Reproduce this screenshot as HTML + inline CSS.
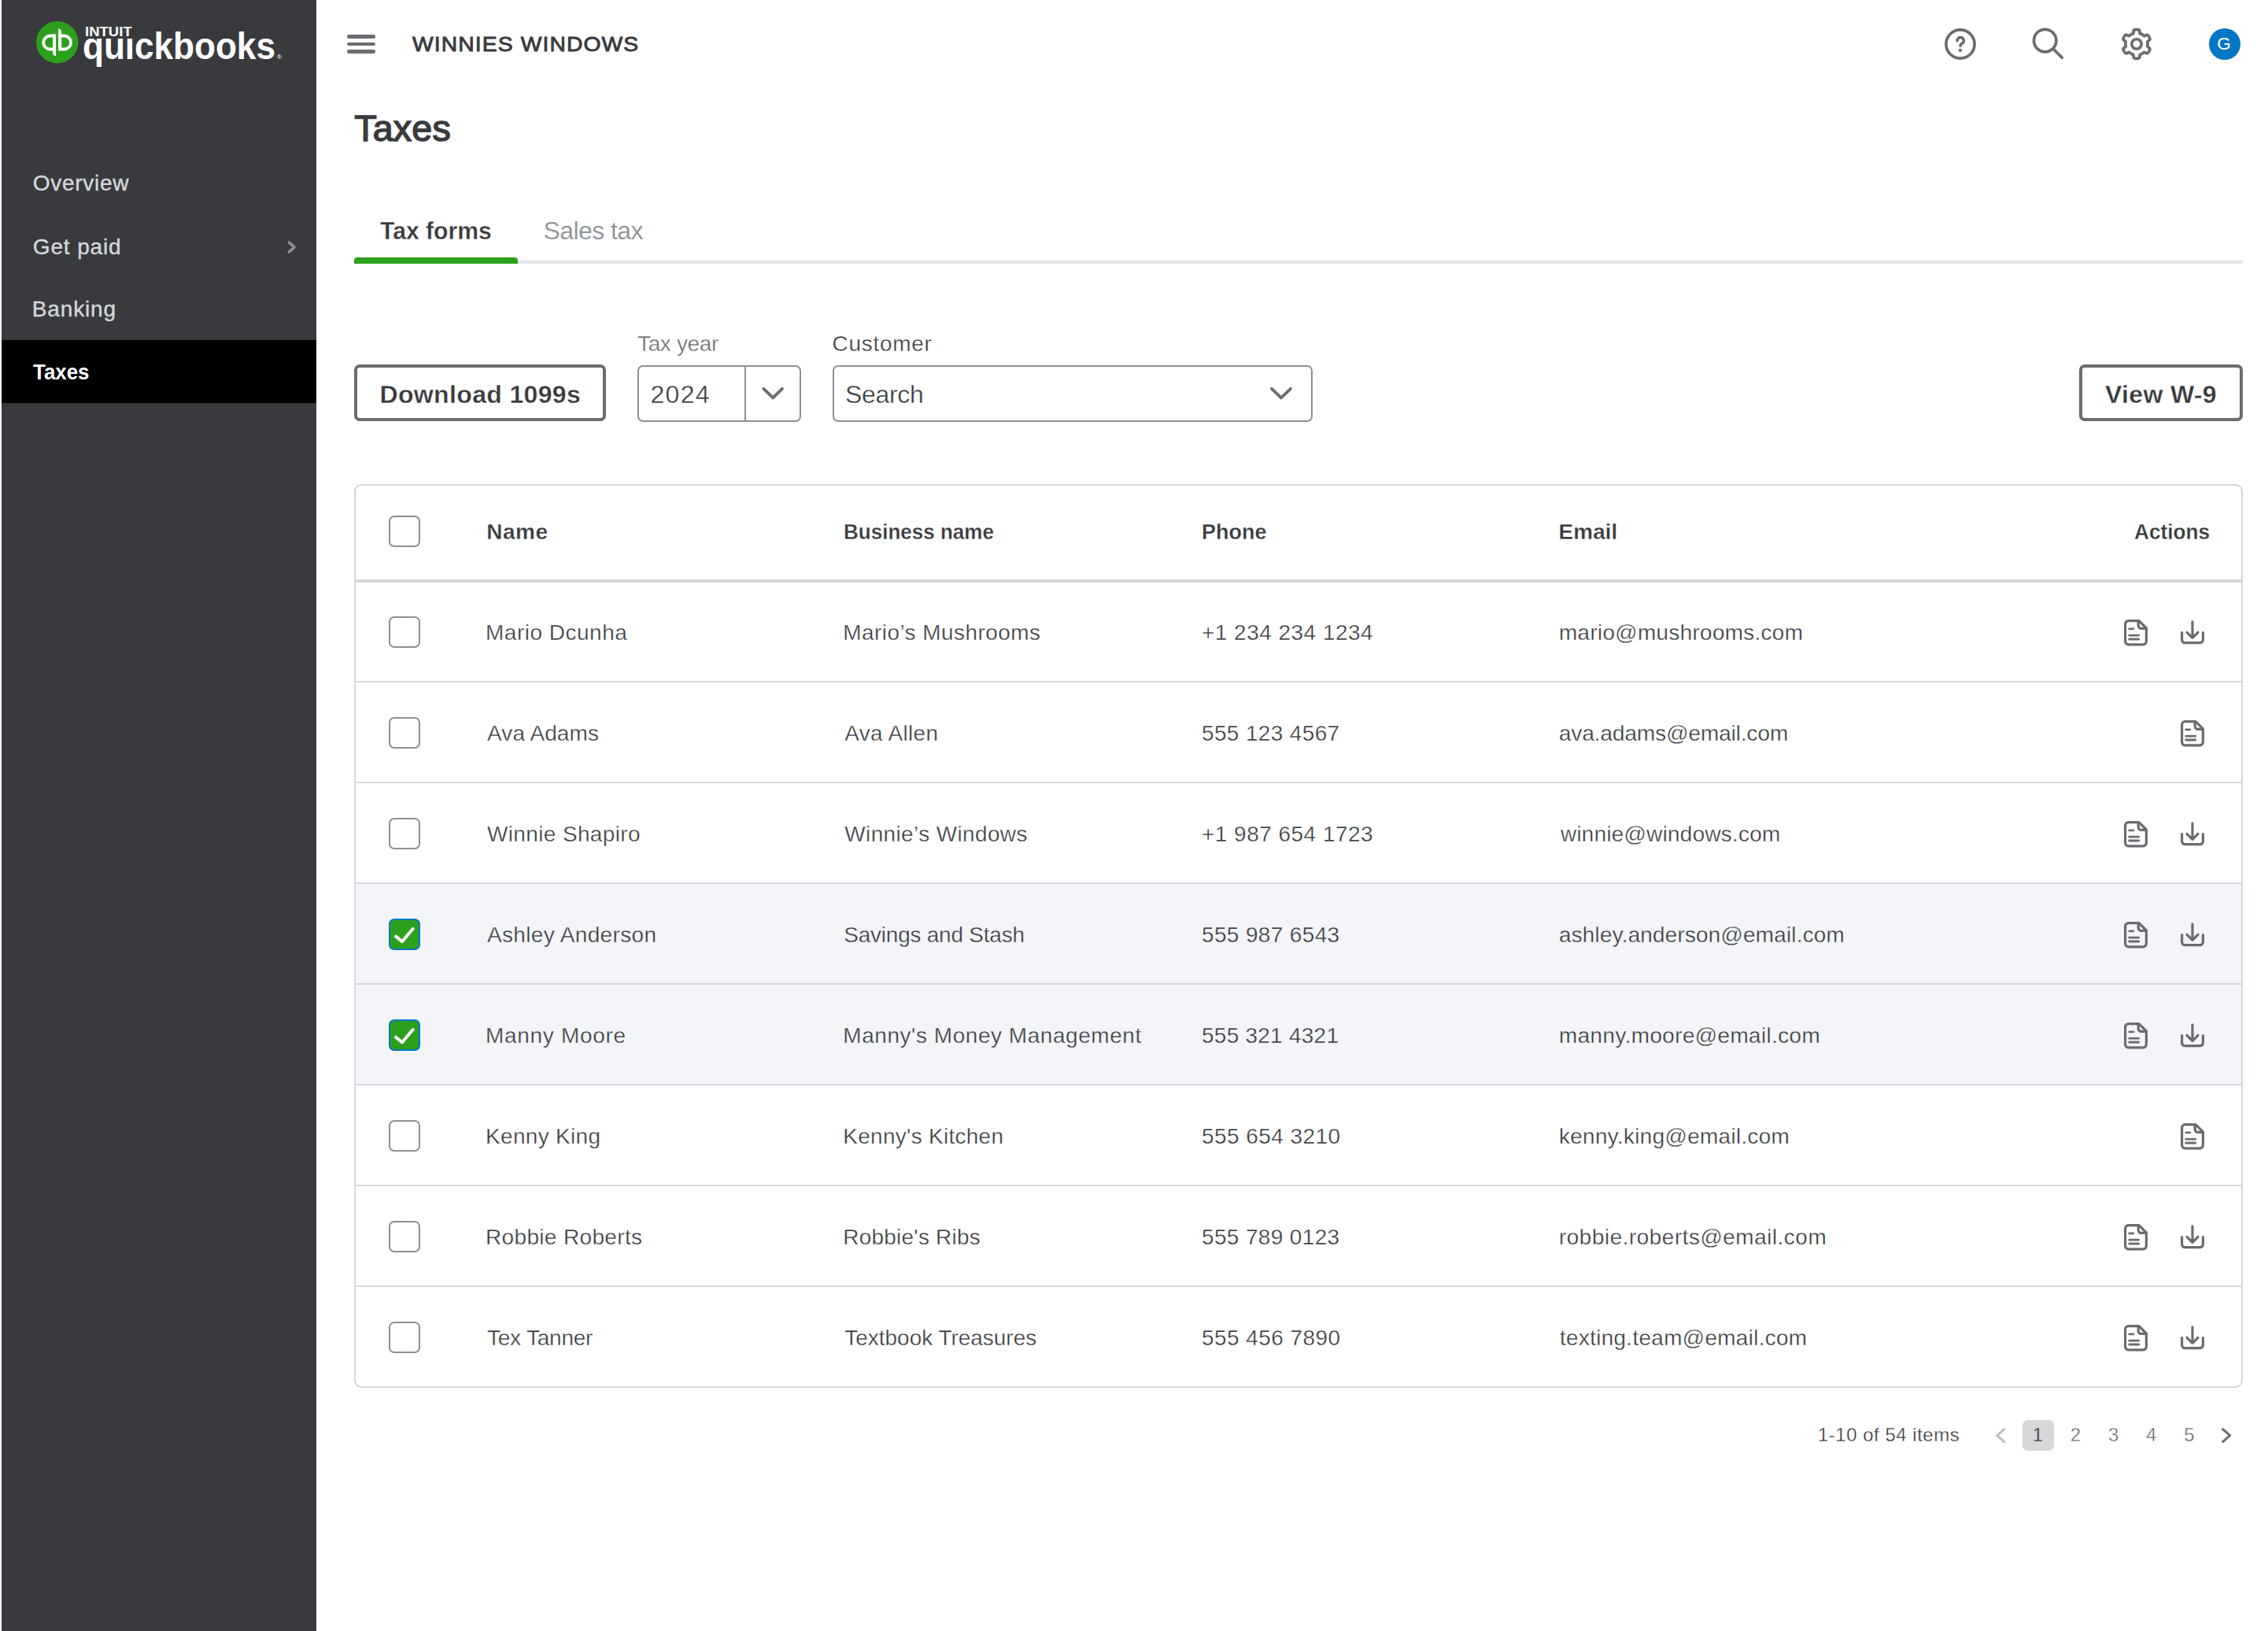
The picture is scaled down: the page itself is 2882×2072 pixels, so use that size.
<!DOCTYPE html>
<html lang="en"><head><meta charset="utf-8"><title>Taxes - QuickBooks</title>
<style>
html,body{margin:0;padding:0;background:#fff;}
body{width:2882px;height:2072px;position:relative;overflow:hidden;font-family:"Liberation Sans",sans-serif;color:#393A3D;}
.t{position:absolute;white-space:nowrap;line-height:1;}
.abs{position:absolute;}
svg{position:absolute;overflow:visible;}
.side{position:absolute;left:2px;top:0;width:400px;height:2072px;background:#393A3D;}
.active{position:absolute;left:2px;top:432px;width:400px;height:80px;background:#000;}
.cb{position:absolute;left:494px;width:36px;height:36px;border:2px solid #8D9096;border-radius:7px;background:#fff;}
.cb.on{background:#2CA01C;border-color:#0077C5;}
.btn{position:absolute;box-sizing:border-box;border:4px solid #6B6C72;border-radius:7px;background:#fff;}
.sel{position:absolute;box-sizing:border-box;border:2px solid #8D9096;border-radius:7px;background:#fff;}
.hl{position:absolute;left:452px;width:2396px;height:2px;background:#D4D7DC;}
.rowsel{position:absolute;left:452px;width:2396px;background:#F4F5F8;}
</style></head><body>

<div class="side"></div><div class="active"></div>
<svg style="left:45.8px;top:26.5px" width="53.4" height="53.4" viewBox="135 152.5 1245 1245">
<circle cx="757.5" cy="775" r="622.5" fill="#2CA01C"/>
<path d="M672 585H547a197.5 197.5 0 0 0 0 395h80" fill="none" stroke="#fff" stroke-width="90"/>
<path d="M625 540h95v645q-95-20-95-100z" fill="#fff"/>
<path d="M790 370q95 20 95 100v555h-95z" fill="#fff"/>
<path d="M838 585h127a197.5 197.5 0 0 1 0 395h-82" fill="none" stroke="#fff" stroke-width="90"/>
</svg>
<span class="t" style="left:108.38px;top:32.03px;font-size:16.5px;letter-spacing:0.031px;font-weight:bold;color:#fff;transform:scaleX(1.12);transform-origin:0 0;">INTUIT</span>
<span class="t" style="left:105.37px;top:35.39px;font-size:47.5px;letter-spacing:-0.062px;font-weight:bold;color:#fff;transform:scaleX(0.93);transform-origin:0 0;">quıckbooks</span>
<span class="t" style="left:352.00px;top:69.43px;font-size:8px;color:#fff;">®</span>
<span class="t" style="left:41.80px;top:219.30px;font-size:28px;letter-spacing:0.704px;color:#D4D7DC;-webkit-text-stroke:0.4px #D4D7DC;">Overview</span>
<span class="t" style="left:41.80px;top:299.80px;font-size:28px;letter-spacing:0.861px;color:#D4D7DC;-webkit-text-stroke:0.4px #D4D7DC;">Get paid</span>
<span class="t" style="left:40.80px;top:379.30px;font-size:28px;letter-spacing:0.848px;color:#D4D7DC;-webkit-text-stroke:0.4px #D4D7DC;">Banking</span>
<span class="t" style="left:42.00px;top:458.70px;font-size:28px;font-weight:bold;color:#fff;transform:scaleX(0.9252);transform-origin:0 0;">Taxes</span>
<svg style="left:360px;top:300px" width="24" height="28" viewBox="360 300 24 28"><path d="M367.3 308l6.8 6-6.8 6" fill="none" stroke="#8D9096" stroke-width="3.6" stroke-linecap="round" stroke-linejoin="round"/></svg>
<div class="abs" style="left:441px;top:44px;width:36px;height:4.5px;border-radius:2.25px;background:#6B6C72"></div>
<div class="abs" style="left:441px;top:53.6px;width:36px;height:4.5px;border-radius:2.25px;background:#6B6C72"></div>
<div class="abs" style="left:441px;top:63.4px;width:36px;height:4.5px;border-radius:2.25px;background:#6B6C72"></div>
<span class="t" style="left:523.50px;top:43.15px;font-size:26.4px;letter-spacing:1.053px;transform:scaleX(1.07);transform-origin:0 0;-webkit-text-stroke:0.9px #393A3D;">WINNIES WINDOWS</span>
<svg style="left:2467.9px;top:32.9px" width="46" height="46" viewBox="-23 -23 46 46">
<circle cx="0" cy="0" r="18.1" fill="none" stroke="#6B6C72" stroke-width="3.7"/>
<path d="M-3.9 -4.3a4.15 4.15 0 1 1 7.33 2.67C1.6 -0.2 0 0.1 0 2.3" fill="none" stroke="#6B6C72" stroke-width="3.6" stroke-linecap="round"/>
<circle cx="-0.1" cy="8" r="2.15" fill="#6B6C72"/>
</svg>
<svg style="left:2578px;top:31px" width="50" height="50" viewBox="2578 31 50 50">
<circle cx="2598.7" cy="51.6" r="14.2" fill="none" stroke="#6B6C72" stroke-width="3.7"/>
<path d="M2609.2 62.1L2620.3 73.2" fill="none" stroke="#6B6C72" stroke-width="3.7" stroke-linecap="round"/>
</svg>
<svg style="left:2691.9px;top:32.8px" width="46" height="46" viewBox="-23 -23 46 46"><path d="M-4.94 -13.10Q-3.90 -13.45 -3.90 -14.55L-3.90 -15.87Q-3.90 -18.30 -1.47 -18.30L1.47 -18.30Q3.90 -18.30 3.90 -15.87L3.90 -14.55Q3.90 -13.45 4.94 -13.10L5.52 -12.91Q7.14 -12.37 8.42 -11.23L8.87 -10.83Q9.69 -10.10 10.65 -10.65L11.80 -11.31Q13.90 -12.53 15.11 -10.43L16.58 -7.87Q17.80 -5.77 15.70 -4.56L14.55 -3.90Q13.59 -3.35 13.82 -2.27L13.94 -1.67Q14.28 -0.00 13.94 1.67L13.82 2.27Q13.59 3.35 14.55 3.90L15.70 4.56Q17.80 5.77 16.58 7.87L15.11 10.43Q13.90 12.53 11.80 11.31L10.65 10.65Q9.69 10.10 8.87 10.83L8.42 11.23Q7.14 12.37 5.52 12.91L4.94 13.10Q3.90 13.45 3.90 14.55L3.90 15.87Q3.90 18.30 1.47 18.30L-1.47 18.30Q-3.90 18.30 -3.90 15.87L-3.90 14.55Q-3.90 13.45 -4.94 13.10L-5.52 12.91Q-7.14 12.37 -8.42 11.23L-8.87 10.83Q-9.69 10.10 -10.65 10.65L-11.80 11.31Q-13.90 12.53 -15.11 10.43L-16.58 7.87Q-17.80 5.77 -15.70 4.56L-14.55 3.90Q-13.59 3.35 -13.82 2.27L-13.94 1.67Q-14.28 0.00 -13.94 -1.67L-13.82 -2.27Q-13.59 -3.35 -14.55 -3.90L-15.70 -4.56Q-17.80 -5.77 -16.58 -7.87L-15.11 -10.43Q-13.90 -12.53 -11.80 -11.31L-10.65 -10.65Q-9.69 -10.10 -8.87 -10.83L-8.42 -11.23Q-7.14 -12.37 -5.52 -12.91Z" fill="none" stroke="#6B6C72" stroke-width="3.7" stroke-linejoin="round"/><circle cx="0" cy="0" r="6.2" fill="none" stroke="#6B6C72" stroke-width="3.6"/></svg>
<div class="abs" style="left:2806.6px;top:35.6px;width:40.2px;height:40.2px;border-radius:50%;background:#0077C5"></div>
<span class="t" style="left:2817.30px;top:44.85px;font-size:22.5px;color:#fff;">G</span>
<span class="t" style="left:450.20px;top:140.17px;font-size:46.7px;letter-spacing:0.146px;-webkit-text-stroke:1.5px #393A3D;">Taxes</span>
<div class="abs" style="left:450px;top:331px;width:2400px;height:4px;background:#E3E5E8"></div>
<div class="abs" style="left:450px;top:327px;width:208px;height:8px;border-radius:4px 4px 0 0;background:#2CA01C"></div>
<span class="t" style="left:483.00px;top:276.91px;font-size:32px;font-weight:bold;transform:scaleX(0.9415);transform-origin:0 0;-webkit-text-stroke:0.3px #fff;">Tax forms</span>
<span class="t" style="left:690.50px;top:276.91px;font-size:32px;letter-spacing:-0.566px;color:#8D9096;-webkit-text-stroke:0.2px #fff;">Sales tax</span>
<div class="btn" style="left:450px;top:463px;width:320px;height:72px"></div>
<span class="t" style="left:482.50px;top:484.61px;font-size:32px;letter-spacing:0.350px;font-weight:bold;-webkit-text-stroke:0.3px #fff;">Download 1099s</span>
<span class="t" style="left:810.00px;top:422.60px;font-size:28px;letter-spacing:-0.357px;color:#6B6C72;-webkit-text-stroke:0.35px #fff;">Tax year</span>
<div class="sel" style="left:810px;top:464px;width:208px;height:71.5px"></div>
<div class="abs" style="left:945.6px;top:466px;width:2px;height:68px;background:#8D9096"></div>
<span class="t" style="left:826.50px;top:484.61px;font-size:32px;letter-spacing:1.270px;-webkit-text-stroke:0.35px #fff;">2024</span>
<svg style="left:960px;top:485px" width="44" height="30" viewBox="960 485 44 30"><path d="M970.4 493.8l11.8 11.6 11.8-11.6" fill="none" stroke="#6B6C72" stroke-width="3.8" stroke-linecap="round" stroke-linejoin="round"/></svg>
<span class="t" style="left:1057.60px;top:422.60px;font-size:28px;letter-spacing:0.680px;-webkit-text-stroke:0.35px #fff;">Customer</span>
<div class="sel" style="left:1058px;top:464px;width:610px;height:71.5px"></div>
<span class="t" style="left:1074.00px;top:484.61px;font-size:32px;letter-spacing:-0.319px;-webkit-text-stroke:0.35px #fff;">Search</span>
<svg style="left:1606px;top:485px" width="44" height="30" viewBox="1606 485 44 30"><path d="M1616 493.8l12 11.6 12-11.6" fill="none" stroke="#6B6C72" stroke-width="3.8" stroke-linecap="round" stroke-linejoin="round"/></svg>
<div class="btn" style="left:2642px;top:463px;width:208px;height:72px"></div>
<span class="t" style="left:2675.00px;top:484.61px;font-size:32px;letter-spacing:0.335px;font-weight:bold;-webkit-text-stroke:0.3px #fff;">View W-9</span>
<div class="abs" style="left:450px;top:615px;width:2396px;height:1144px;border:2px solid #D4D7DC;border-radius:9px;background:#fff"></div>
<div class="rowsel" style="top:1123px;height:126px"></div>
<div class="rowsel" style="top:1251px;height:126px"></div>
<div class="hl" style="top:735.5px;height:4px"></div>
<div class="hl" style="top:865px"></div>
<div class="hl" style="top:993px"></div>
<div class="hl" style="top:1121px"></div>
<div class="hl" style="top:1249px"></div>
<div class="hl" style="top:1377px"></div>
<div class="hl" style="top:1505px"></div>
<div class="hl" style="top:1633px"></div>
<div class="cb" style="top:655px"></div>
<span class="t" style="left:618.30px;top:662.10px;font-size:28px;letter-spacing:0.470px;font-weight:bold;-webkit-text-stroke:0.3px #fff;">Name</span>
<span class="t" style="left:1072.37px;top:662.10px;font-size:28px;font-weight:bold;transform:scaleX(0.9296);transform-origin:0 0;-webkit-text-stroke:0.3px #fff;">Business name</span>
<span class="t" style="left:1526.64px;top:662.10px;font-size:28px;font-weight:bold;transform:scaleX(0.9633);transform-origin:0 0;-webkit-text-stroke:0.3px #fff;">Phone</span>
<span class="t" style="left:1980.60px;top:662.10px;font-size:28px;letter-spacing:-0.006px;font-weight:bold;-webkit-text-stroke:0.3px #fff;">Email</span>
<span class="t" style="left:2712.00px;top:662.10px;font-size:28px;font-weight:bold;transform:scaleX(0.9343);transform-origin:0 0;-webkit-text-stroke:0.3px #fff;">Actions</span>
<div class="cb" style="top:783.3px"></div>
<span class="t" style="left:617.00px;top:789.90px;font-size:28px;letter-spacing:0.497px;-webkit-text-stroke:0.35px #fff;">Mario Dcunha</span>
<span class="t" style="left:1071.30px;top:789.90px;font-size:28px;letter-spacing:0.433px;-webkit-text-stroke:0.35px #fff;">Mario’s Mushrooms</span>
<span class="t" style="left:1527.00px;top:789.90px;font-size:28px;letter-spacing:0.471px;-webkit-text-stroke:0.35px #fff;">+1 234 234 1234</span>
<span class="t" style="left:1981.00px;top:789.90px;font-size:28px;letter-spacing:0.258px;-webkit-text-stroke:0.35px #fff;">mario@mushrooms.com</span>
<svg style="left:2698.9px;top:786.6px" width="30" height="33.4" viewBox="0 0 30 33.4"><path d="M19 1.6H5.6a4 4 0 0 0-4 4v22.2a4 4 0 0 0 4 4h18.8a4 4 0 0 0 4-4V11z" fill="none" stroke="#6B6C72" stroke-width="3.2" stroke-linejoin="round"/><path d="M18.2 2.4v5.4a3.6 3.6 0 0 0 3.6 3.6h5.8" fill="none" stroke="#6B6C72" stroke-width="3.2" stroke-linejoin="round"/><path d="M6.7 11.8h5.2M6.7 20.1h12M6.7 25h12" fill="none" stroke="#6B6C72" stroke-width="2.8" stroke-linecap="round"/></svg>
<svg style="left:2771px;top:788px" width="30" height="30.3" viewBox="0 0 30 30.3"><path d="M1.6 15.6v9.1a4 4 0 0 0 4 4h18.8a4 4 0 0 0 4-4v-9.1" fill="none" stroke="#6B6C72" stroke-width="3.2" stroke-linecap="round" stroke-linejoin="round"/><path d="M15 1.8v20.4M8 15.3l7 7.1 7-7.1" fill="none" stroke="#6B6C72" stroke-width="3.2" stroke-linecap="round" stroke-linejoin="round"/></svg>
<div class="cb" style="top:911.3px"></div>
<span class="t" style="left:619.00px;top:917.90px;font-size:28px;letter-spacing:0.104px;-webkit-text-stroke:0.35px #fff;">Ava Adams</span>
<span class="t" style="left:1073.30px;top:917.90px;font-size:28px;letter-spacing:0.311px;-webkit-text-stroke:0.35px #fff;">Ava Allen</span>
<span class="t" style="left:1527.00px;top:917.90px;font-size:28px;letter-spacing:0.354px;-webkit-text-stroke:0.35px #fff;">555 123 4567</span>
<span class="t" style="left:1981.00px;top:917.90px;font-size:28px;letter-spacing:-0.092px;-webkit-text-stroke:0.35px #fff;">ava.adams@email.com</span>
<svg style="left:2771px;top:914.6px" width="30" height="33.4" viewBox="0 0 30 33.4"><path d="M19 1.6H5.6a4 4 0 0 0-4 4v22.2a4 4 0 0 0 4 4h18.8a4 4 0 0 0 4-4V11z" fill="none" stroke="#6B6C72" stroke-width="3.2" stroke-linejoin="round"/><path d="M18.2 2.4v5.4a3.6 3.6 0 0 0 3.6 3.6h5.8" fill="none" stroke="#6B6C72" stroke-width="3.2" stroke-linejoin="round"/><path d="M6.7 11.8h5.2M6.7 20.1h12M6.7 25h12" fill="none" stroke="#6B6C72" stroke-width="2.8" stroke-linecap="round"/></svg>
<div class="cb" style="top:1039.3px"></div>
<span class="t" style="left:619.00px;top:1045.90px;font-size:28px;letter-spacing:0.361px;-webkit-text-stroke:0.35px #fff;">Winnie Shapiro</span>
<span class="t" style="left:1073.30px;top:1045.90px;font-size:28px;letter-spacing:0.362px;-webkit-text-stroke:0.35px #fff;">Winnie’s Windows</span>
<span class="t" style="left:1527.00px;top:1045.90px;font-size:28px;letter-spacing:0.471px;-webkit-text-stroke:0.35px #fff;">+1 987 654 1723</span>
<span class="t" style="left:1983.00px;top:1045.90px;font-size:28px;letter-spacing:0.204px;-webkit-text-stroke:0.35px #fff;">winnie@windows.com</span>
<svg style="left:2698.9px;top:1042.6px" width="30" height="33.4" viewBox="0 0 30 33.4"><path d="M19 1.6H5.6a4 4 0 0 0-4 4v22.2a4 4 0 0 0 4 4h18.8a4 4 0 0 0 4-4V11z" fill="none" stroke="#6B6C72" stroke-width="3.2" stroke-linejoin="round"/><path d="M18.2 2.4v5.4a3.6 3.6 0 0 0 3.6 3.6h5.8" fill="none" stroke="#6B6C72" stroke-width="3.2" stroke-linejoin="round"/><path d="M6.7 11.8h5.2M6.7 20.1h12M6.7 25h12" fill="none" stroke="#6B6C72" stroke-width="2.8" stroke-linecap="round"/></svg>
<svg style="left:2771px;top:1044px" width="30" height="30.3" viewBox="0 0 30 30.3"><path d="M1.6 15.6v9.1a4 4 0 0 0 4 4h18.8a4 4 0 0 0 4-4v-9.1" fill="none" stroke="#6B6C72" stroke-width="3.2" stroke-linecap="round" stroke-linejoin="round"/><path d="M15 1.8v20.4M8 15.3l7 7.1 7-7.1" fill="none" stroke="#6B6C72" stroke-width="3.2" stroke-linecap="round" stroke-linejoin="round"/></svg>
<div class="cb on" style="top:1167.3px"></div>
<svg style="left:494px;top:1167px" width="40" height="40" viewBox="0 0 40 40"><path d="M9 22.6l8 6.6 13.6-16.2" fill="none" stroke="#fff" stroke-width="4" stroke-linecap="round" stroke-linejoin="round"/></svg>
<span class="t" style="left:619.00px;top:1173.90px;font-size:28px;letter-spacing:0.349px;-webkit-text-stroke:0.35px #F4F5F8;">Ashley Anderson</span>
<span class="t" style="left:1072.30px;top:1173.90px;font-size:28px;letter-spacing:-0.239px;-webkit-text-stroke:0.35px #F4F5F8;">Savings and Stash</span>
<span class="t" style="left:1527.00px;top:1173.90px;font-size:28px;letter-spacing:0.354px;-webkit-text-stroke:0.35px #F4F5F8;">555 987 6543</span>
<span class="t" style="left:1981.00px;top:1173.90px;font-size:28px;letter-spacing:0.142px;-webkit-text-stroke:0.35px #F4F5F8;">ashley.anderson@email.com</span>
<svg style="left:2698.9px;top:1170.6px" width="30" height="33.4" viewBox="0 0 30 33.4"><path d="M19 1.6H5.6a4 4 0 0 0-4 4v22.2a4 4 0 0 0 4 4h18.8a4 4 0 0 0 4-4V11z" fill="none" stroke="#6B6C72" stroke-width="3.2" stroke-linejoin="round"/><path d="M18.2 2.4v5.4a3.6 3.6 0 0 0 3.6 3.6h5.8" fill="none" stroke="#6B6C72" stroke-width="3.2" stroke-linejoin="round"/><path d="M6.7 11.8h5.2M6.7 20.1h12M6.7 25h12" fill="none" stroke="#6B6C72" stroke-width="2.8" stroke-linecap="round"/></svg>
<svg style="left:2771px;top:1172px" width="30" height="30.3" viewBox="0 0 30 30.3"><path d="M1.6 15.6v9.1a4 4 0 0 0 4 4h18.8a4 4 0 0 0 4-4v-9.1" fill="none" stroke="#6B6C72" stroke-width="3.2" stroke-linecap="round" stroke-linejoin="round"/><path d="M15 1.8v20.4M8 15.3l7 7.1 7-7.1" fill="none" stroke="#6B6C72" stroke-width="3.2" stroke-linecap="round" stroke-linejoin="round"/></svg>
<div class="cb on" style="top:1295.3px"></div>
<svg style="left:494px;top:1295px" width="40" height="40" viewBox="0 0 40 40"><path d="M9 22.6l8 6.6 13.6-16.2" fill="none" stroke="#fff" stroke-width="4" stroke-linecap="round" stroke-linejoin="round"/></svg>
<span class="t" style="left:617.00px;top:1301.90px;font-size:28px;letter-spacing:0.679px;-webkit-text-stroke:0.35px #F4F5F8;">Manny Moore</span>
<span class="t" style="left:1071.30px;top:1301.90px;font-size:28px;letter-spacing:0.542px;-webkit-text-stroke:0.35px #F4F5F8;">Manny's Money Management</span>
<span class="t" style="left:1527.00px;top:1301.90px;font-size:28px;letter-spacing:0.245px;-webkit-text-stroke:0.35px #F4F5F8;">555 321 4321</span>
<span class="t" style="left:1981.00px;top:1301.90px;font-size:28px;letter-spacing:0.335px;-webkit-text-stroke:0.35px #F4F5F8;">manny.moore@email.com</span>
<svg style="left:2698.9px;top:1298.6px" width="30" height="33.4" viewBox="0 0 30 33.4"><path d="M19 1.6H5.6a4 4 0 0 0-4 4v22.2a4 4 0 0 0 4 4h18.8a4 4 0 0 0 4-4V11z" fill="none" stroke="#6B6C72" stroke-width="3.2" stroke-linejoin="round"/><path d="M18.2 2.4v5.4a3.6 3.6 0 0 0 3.6 3.6h5.8" fill="none" stroke="#6B6C72" stroke-width="3.2" stroke-linejoin="round"/><path d="M6.7 11.8h5.2M6.7 20.1h12M6.7 25h12" fill="none" stroke="#6B6C72" stroke-width="2.8" stroke-linecap="round"/></svg>
<svg style="left:2771px;top:1300px" width="30" height="30.3" viewBox="0 0 30 30.3"><path d="M1.6 15.6v9.1a4 4 0 0 0 4 4h18.8a4 4 0 0 0 4-4v-9.1" fill="none" stroke="#6B6C72" stroke-width="3.2" stroke-linecap="round" stroke-linejoin="round"/><path d="M15 1.8v20.4M8 15.3l7 7.1 7-7.1" fill="none" stroke="#6B6C72" stroke-width="3.2" stroke-linecap="round" stroke-linejoin="round"/></svg>
<div class="cb" style="top:1423.3px"></div>
<span class="t" style="left:617.00px;top:1429.90px;font-size:28px;letter-spacing:0.318px;-webkit-text-stroke:0.35px #fff;">Kenny King</span>
<span class="t" style="left:1071.30px;top:1429.90px;font-size:28px;letter-spacing:0.269px;-webkit-text-stroke:0.35px #fff;">Kenny's Kitchen</span>
<span class="t" style="left:1527.00px;top:1429.90px;font-size:28px;letter-spacing:0.426px;-webkit-text-stroke:0.35px #fff;">555 654 3210</span>
<span class="t" style="left:1981.00px;top:1429.90px;font-size:28px;letter-spacing:0.270px;-webkit-text-stroke:0.35px #fff;">kenny.king@email.com</span>
<svg style="left:2771px;top:1426.6px" width="30" height="33.4" viewBox="0 0 30 33.4"><path d="M19 1.6H5.6a4 4 0 0 0-4 4v22.2a4 4 0 0 0 4 4h18.8a4 4 0 0 0 4-4V11z" fill="none" stroke="#6B6C72" stroke-width="3.2" stroke-linejoin="round"/><path d="M18.2 2.4v5.4a3.6 3.6 0 0 0 3.6 3.6h5.8" fill="none" stroke="#6B6C72" stroke-width="3.2" stroke-linejoin="round"/><path d="M6.7 11.8h5.2M6.7 20.1h12M6.7 25h12" fill="none" stroke="#6B6C72" stroke-width="2.8" stroke-linecap="round"/></svg>
<div class="cb" style="top:1551.3px"></div>
<span class="t" style="left:617.00px;top:1557.90px;font-size:28px;letter-spacing:0.342px;-webkit-text-stroke:0.35px #fff;">Robbie Roberts</span>
<span class="t" style="left:1071.30px;top:1557.90px;font-size:28px;letter-spacing:0.219px;-webkit-text-stroke:0.35px #fff;">Robbie's Ribs</span>
<span class="t" style="left:1527.00px;top:1557.90px;font-size:28px;letter-spacing:0.354px;-webkit-text-stroke:0.35px #fff;">555 789 0123</span>
<span class="t" style="left:1981.00px;top:1557.90px;font-size:28px;letter-spacing:0.476px;-webkit-text-stroke:0.35px #fff;">robbie.roberts@email.com</span>
<svg style="left:2698.9px;top:1554.6px" width="30" height="33.4" viewBox="0 0 30 33.4"><path d="M19 1.6H5.6a4 4 0 0 0-4 4v22.2a4 4 0 0 0 4 4h18.8a4 4 0 0 0 4-4V11z" fill="none" stroke="#6B6C72" stroke-width="3.2" stroke-linejoin="round"/><path d="M18.2 2.4v5.4a3.6 3.6 0 0 0 3.6 3.6h5.8" fill="none" stroke="#6B6C72" stroke-width="3.2" stroke-linejoin="round"/><path d="M6.7 11.8h5.2M6.7 20.1h12M6.7 25h12" fill="none" stroke="#6B6C72" stroke-width="2.8" stroke-linecap="round"/></svg>
<svg style="left:2771px;top:1556px" width="30" height="30.3" viewBox="0 0 30 30.3"><path d="M1.6 15.6v9.1a4 4 0 0 0 4 4h18.8a4 4 0 0 0 4-4v-9.1" fill="none" stroke="#6B6C72" stroke-width="3.2" stroke-linecap="round" stroke-linejoin="round"/><path d="M15 1.8v20.4M8 15.3l7 7.1 7-7.1" fill="none" stroke="#6B6C72" stroke-width="3.2" stroke-linecap="round" stroke-linejoin="round"/></svg>
<div class="cb" style="top:1679.3px"></div>
<span class="t" style="left:619.00px;top:1685.90px;font-size:28px;letter-spacing:-0.227px;-webkit-text-stroke:0.35px #fff;">Tex Tanner</span>
<span class="t" style="left:1073.30px;top:1685.90px;font-size:28px;letter-spacing:-0.026px;-webkit-text-stroke:0.35px #fff;">Textbook Treasures</span>
<span class="t" style="left:1527.00px;top:1685.90px;font-size:28px;letter-spacing:0.426px;-webkit-text-stroke:0.35px #fff;">555 456 7890</span>
<span class="t" style="left:1982.00px;top:1685.90px;font-size:28px;letter-spacing:0.266px;-webkit-text-stroke:0.35px #fff;">texting.team@email.com</span>
<svg style="left:2698.9px;top:1682.6px" width="30" height="33.4" viewBox="0 0 30 33.4"><path d="M19 1.6H5.6a4 4 0 0 0-4 4v22.2a4 4 0 0 0 4 4h18.8a4 4 0 0 0 4-4V11z" fill="none" stroke="#6B6C72" stroke-width="3.2" stroke-linejoin="round"/><path d="M18.2 2.4v5.4a3.6 3.6 0 0 0 3.6 3.6h5.8" fill="none" stroke="#6B6C72" stroke-width="3.2" stroke-linejoin="round"/><path d="M6.7 11.8h5.2M6.7 20.1h12M6.7 25h12" fill="none" stroke="#6B6C72" stroke-width="2.8" stroke-linecap="round"/></svg>
<svg style="left:2771px;top:1684px" width="30" height="30.3" viewBox="0 0 30 30.3"><path d="M1.6 15.6v9.1a4 4 0 0 0 4 4h18.8a4 4 0 0 0 4-4v-9.1" fill="none" stroke="#6B6C72" stroke-width="3.2" stroke-linecap="round" stroke-linejoin="round"/><path d="M15 1.8v20.4M8 15.3l7 7.1 7-7.1" fill="none" stroke="#6B6C72" stroke-width="3.2" stroke-linecap="round" stroke-linejoin="round"/></svg>
<span class="t" style="left:2310.00px;top:1811.28px;font-size:24px;letter-spacing:0.507px;-webkit-text-stroke:0.3px #fff;">1-10 of 54 items</span>
<svg style="left:2530px;top:1808px" width="24" height="32" viewBox="2530 1808 24 32"><path d="M2546.8 1815.6l-9 8 9 8" fill="none" stroke="#BABEC5" stroke-width="3" stroke-linecap="round" stroke-linejoin="round"/></svg>
<div class="abs" style="left:2570px;top:1803.5px;width:40px;height:39.5px;border-radius:7px;background:#D5D7D8"></div>
<span class="t" style="left:2582.80px;top:1811.28px;font-size:24px;-webkit-text-stroke:0.3px #D5D7D8;">1</span>
<span class="t" style="left:2630.80px;top:1811.28px;font-size:24px;color:#6B6C72;-webkit-text-stroke:0.3px #fff;">2</span>
<span class="t" style="left:2679.10px;top:1811.28px;font-size:24px;color:#6B6C72;-webkit-text-stroke:0.3px #fff;">3</span>
<span class="t" style="left:2726.90px;top:1811.28px;font-size:24px;color:#6B6C72;-webkit-text-stroke:0.3px #fff;">4</span>
<span class="t" style="left:2775.20px;top:1811.28px;font-size:24px;color:#6B6C72;-webkit-text-stroke:0.3px #fff;">5</span>
<svg style="left:2816px;top:1808px" width="24" height="32" viewBox="2816 1808 24 32"><path d="M2824.6 1815.6l9 8-9 8" fill="none" stroke="#6B6C72" stroke-width="3" stroke-linecap="round" stroke-linejoin="round"/></svg>
</body></html>
